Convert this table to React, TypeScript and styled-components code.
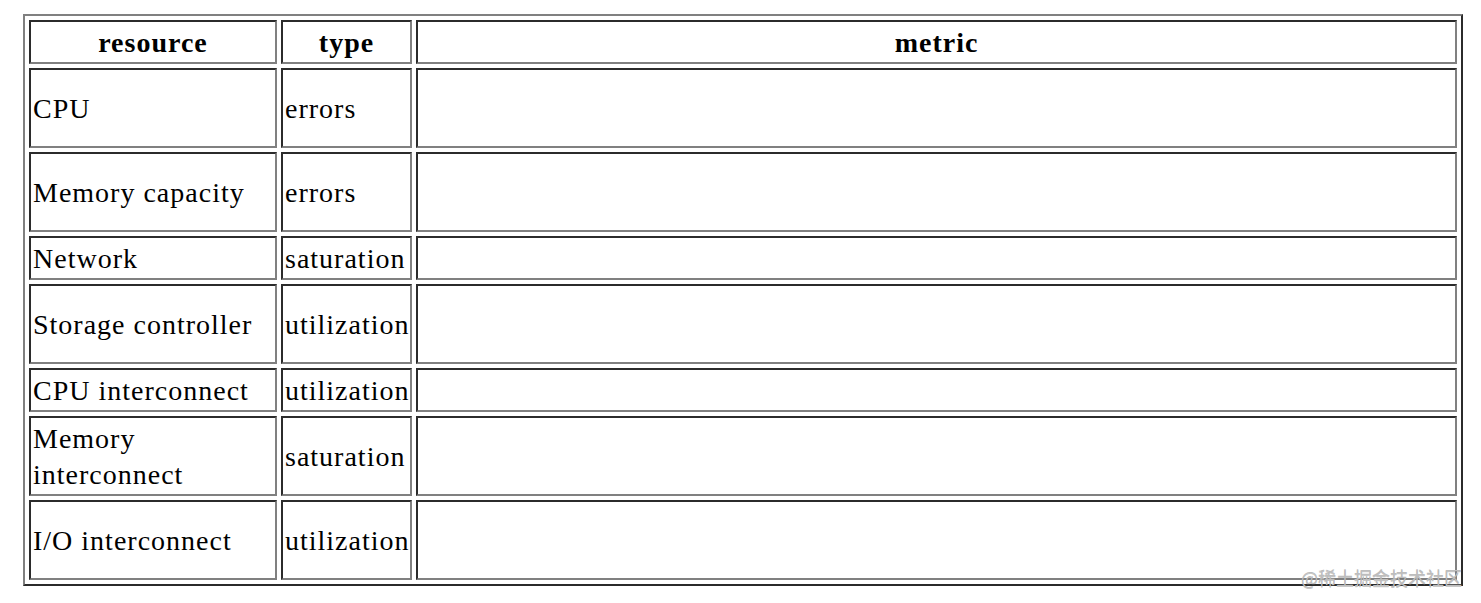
import React from 'react';
import styled, { createGlobalStyle } from 'styled-components';

const GlobalStyle = createGlobalStyle`
  html, body {
    margin: 0;
    padding: 0;
    background: #ffffff;
  }
`;

const Page = styled.div`
  position: relative;
  width: 1481px;
  height: 603px;
  padding: 14px 0 0 23px;
  box-sizing: border-box;
  font-family: "Liberation Serif", "Times New Roman", serif;
  color: #000;
`;

const Table = styled.table`
  width: 1440px;
  table-layout: fixed;
  border-collapse: separate;
  border-spacing: 4px;
  border-style: solid;
  border-width: 2px;
  border-color: #808080 #2b2b2b #2b2b2b #808080;
  box-sizing: border-box;
`;

const Row = styled.tr<{ $tall?: boolean }>`
  height: ${(p) => (p.$tall ? '80px' : '44px')};
`;

const cellBase = `
  box-sizing: border-box;
  border-style: solid;
  border-width: 2px;
  border-color: #2b2b2b #808080 #808080 #2b2b2b;
  padding: 3px 2px 1px 2px;
  font-size: 28px;
  line-height: 36px;
  letter-spacing: 1px;
  vertical-align: middle;
`;

const HeadCell = styled.th<{ $w: number }>`
  ${cellBase}
  width: ${(p) => p.$w}px;
  font-weight: bold;
  text-align: center;
`;

const Cell = styled.td`
  ${cellBase}
  text-align: left;
  font-weight: normal;
`;

const Watermark = styled.div`
  position: absolute;
  right: 19px;
  bottom: 16px;
  font-family: "Noto Sans CJK SC", "Noto Sans", sans-serif;
  font-size: 18px;
  line-height: 20px;
  color: #bdbdbd;
  text-shadow: 0 1px 0 rgba(110, 110, 110, 0.4);
`;

const rows: { resource: string; type: string; tall: boolean }[] = [
  { resource: 'CPU', type: 'errors', tall: true },
  { resource: 'Memory capacity', type: 'errors', tall: true },
  { resource: 'Network', type: 'saturation', tall: false },
  { resource: 'Storage controller', type: 'utilization', tall: true },
  { resource: 'CPU interconnect', type: 'utilization', tall: false },
  { resource: 'Memory interconnect', type: 'saturation', tall: true },
  { resource: 'I/O interconnect', type: 'utilization', tall: true },
];

const App: React.FC = () => {
  return (
    <>
      <GlobalStyle />
      <Page>
        <Table>
          <thead>
            <Row>
              <HeadCell $w={248}>resource</HeadCell>
              <HeadCell $w={131}>type</HeadCell>
              <HeadCell $w={1041}>metric</HeadCell>
            </Row>
          </thead>
          <tbody>
            {rows.map((r) => (
              <Row key={r.resource} $tall={r.tall}>
                <Cell>{r.resource}</Cell>
                <Cell>{r.type}</Cell>
                <Cell />
              </Row>
            ))}
          </tbody>
        </Table>
        <Watermark>@稀土掘金技术社区</Watermark>
      </Page>
    </>
  );
};

export default App;
